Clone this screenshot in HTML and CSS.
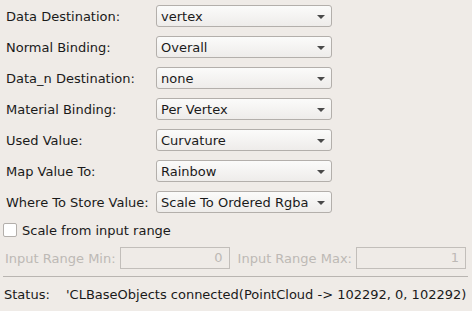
FILE: index.html
```html
<!DOCTYPE html>
<html lang="en">
<head>
    <meta charset="UTF-8">
    <title>Color Map Options</title>
    <link rel="stylesheet" href="styles.css">
</head>
<body>
    <div class="panel">
        <div class="form">
            <label>Data Destination:</label>
            <div class="combo"><span>vertex</span><i class="arrow"></i></div>
            <label>Normal Binding:</label>
            <div class="combo"><span>Overall</span><i class="arrow"></i></div>
            <label>Data_n Destination:</label>
            <div class="combo"><span>none</span><i class="arrow"></i></div>
            <label>Material Binding:</label>
            <div class="combo"><span>Per Vertex</span><i class="arrow"></i></div>
            <label>Used Value:</label>
            <div class="combo"><span>Curvature</span><i class="arrow"></i></div>
            <label>Map Value To:</label>
            <div class="combo"><span>Rainbow</span><i class="arrow"></i></div>
            <label>Where To Store Value:</label>
            <div class="combo"><span>Scale To Ordered Rgba</span><i class="arrow"></i></div>
        </div>

        <div class="check-row">
            <span class="checkbox"></span>
            <span>Scale from input range</span>
        </div>

        <div class="range-row">
            <label class="disabled">Input Range Min:</label>
            <div class="field">0</div>
            <label class="disabled max-label">Input Range Max:</label>
            <div class="field">1</div>
        </div>
    </div>

    <div class="separator"></div>

    <div class="status">
        <span class="status-label">Status:</span>
        <span>'CLBaseObjects connected(PointCloud -&gt; 102292, 0, 102292)</span>
    </div>
</body>
</html>
```

FILE: styles.css
```css
:root {
    --bg: #efebe7;
    --text: #1a1a1a;
    --disabled: #bdb9b5;
    --border: #b3afab;
}

* {
    margin: 0;
    padding: 0;
    box-sizing: border-box;
}

body {
    background-color: var(--bg);
    color: var(--text);
    font-family: 'DejaVu Sans', sans-serif;
    font-size: 13px;
    width: 472px;
    height: 311px;
    overflow: hidden;
}

.panel {
    padding: 5px 0 0 6px;
}

.form {
    display: grid;
    grid-template-columns: 150px 176px;
    grid-auto-rows: 22px;
    row-gap: 9px;
    align-items: center;
}

.combo {
    height: 22px;
    border: 1px solid var(--border);
    border-radius: 3px;
    background: linear-gradient(#fbfbfa, #eeecea);
    display: flex;
    align-items: center;
    justify-content: space-between;
    padding: 0 6px 0 4px;
}

.arrow {
    width: 0;
    height: 0;
    border-left: 4px solid transparent;
    border-right: 4px solid transparent;
    border-top: 4px solid #4a4a4a;
    margin-top: 1px;
}

.check-row {
    display: flex;
    align-items: center;
    gap: 5px;
    height: 22px;
    margin: 6px 0 0 -3px;
}

.checkbox {
    width: 14px;
    height: 14px;
    background-color: #fff;
    border: 1px solid var(--border);
    border-radius: 2px;
}

.range-row {
    display: flex;
    align-items: center;
    height: 22px;
    margin: 6px 0 0 -1px;
}

.disabled {
    color: var(--disabled);
}

.field {
    width: 110px;
    height: 22px;
    border: 1px solid #c2beba;
    text-align: right;
    line-height: 20px;
    padding-right: 6px;
    color: var(--disabled);
    margin-left: 4px;
}

.max-label {
    margin-left: 8px;
}

.separator {
    height: 1px;
    background-color: #b9b5b1;
    margin: 7px 4px 0 3px;
}

.status {
    display: flex;
    margin: 10px 0 0 4px;
    line-height: 15px;
}

.status-label {
    width: 62px;
}
```
